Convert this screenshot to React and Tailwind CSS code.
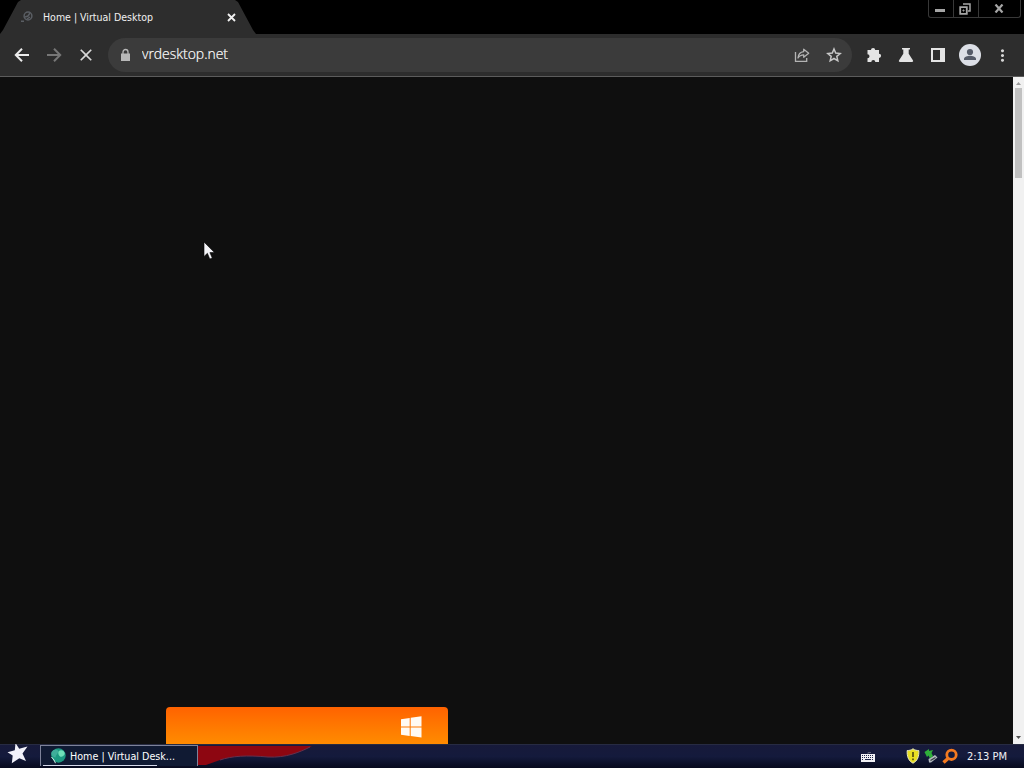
import React from "react";
import { MdClose, MdMoreVert } from "react-icons/md";

const ToolButton = ({ children }) => (
  <button className="flex h-8 w-8 shrink-0 items-center justify-center">
    {children}
  </button>
);

const FaviconLoading = () => (
  <svg className="h-3 w-3" viewBox="0 0 12 12" fill="none">
    <circle cx="7" cy="5" r="3.900" stroke="#5a5e64" strokeWidth="1.500" />
    <path d="M4 6l3-1 2-3M6 8l3-2" stroke="#5a5e64" strokeWidth="1.500" />
    <path d="M0 9.500h3V11H0z" fill="#5a5e64" />
  </svg>
);

const ArrowIcon = ({ className }) => (
  <svg
    className={className}
    viewBox="0 0 16 16"
    fill="none"
    stroke="currentColor"
    strokeWidth="2"
  >
    <path d="M15 8H2.500M8 1.800L1.800 8 8 14.200" />
  </svg>
);

const LockIcon = () => (
  <svg className="h-[14px] w-[14px]" viewBox="0 0 14 14">
    <path d="M3 5.500h9V13H3z" fill="#b8b8b8" />
    <path
      d="M5 6V4a2.500 2.500 0 0 1 5 0v2"
      fill="none"
      stroke="#b8b8b8"
      strokeWidth="1.300"
    />
  </svg>
);

const ShareIcon = () => (
  <svg
    className="h-4 w-4"
    viewBox="0 0 16 16"
    fill="none"
    stroke="#b4b4b4"
    strokeWidth="1.300"
  >
    <path d="M1.500 5v9.300h11.200V11" />
    <path
      d="M9.700 2.200l5 4-5 4V7.800C7 7.800 5.300 8.800 4 11c.3-3.700 2.300-6 5.700-6.400z"
      strokeLinejoin="round"
    />
  </svg>
);

const StarIcon = () => (
  <svg
    className="h-4 w-4"
    viewBox="0 0 16 16"
    fill="none"
    stroke="#c8c8c8"
    strokeWidth="1.500"
  >
    <path d="M8 2l1.700 4.100 4.500.4-3.400 2.900 1 4.400L8 11.500l-3.800 2.300 1-4.400-3.400-2.900 4.500-.4z" />
  </svg>
);

const PuzzleIcon = () => (
  <svg className="h-4 w-4" viewBox="0 0 16 16" fill="#e4e4e4">
    <path d="M1.500 3H5a2.100 2.100 0 1 1 4.200 0H13v3.700a2.100 2.100 0 1 1 0 4.200V15H9.300a2 2 0 1 0-4 0H1.500v-3.700a2 2 0 1 0 0-4z" />
  </svg>
);

const FlaskIcon = () => (
  <svg className="h-4 w-4" viewBox="0 0 16 16" fill="#e4e4e4">
    <path d="M4 1h8v1.500h-1.300v4.300l4.200 6.500c.6 1 .1 1.700-.9 1.700H2c-1 0-1.500-.7-.9-1.700l4.200-6.500V2.500H4z" />
  </svg>
);

const SidePanelIcon = () => (
  <svg className="h-4 w-4" viewBox="0 0 16 16">
    <path
      d="M1 1h14v14H1zM3 3v10h7V3z"
      fill="#e4e4e4"
      fillRule="evenodd"
    />
  </svg>
);

const AvatarIcon = () => (
  <svg className="h-[22px] w-[22px]" viewBox="0 0 22 22">
    <circle cx="11" cy="11" r="11" fill="#dcdfe6" />
    <circle cx="11" cy="8" r="3.100" fill="#555b68" />
    <path d="M5 16v-1.300c0-2 3.700-3 6-3s6 1 6 3V16z" fill="#555b68" />
  </svg>
);

const WindowControls = () => (
  <div className="mr-[3px] flex h-[18px] w-[93px] rounded-b-[3px] border border-t-0 border-[#383838]">
    <button className="flex w-[25px] items-center justify-center border-r border-[#383838]">
      <svg className="mr-0.5 h-3 w-3" viewBox="0 0 12 12">
        <path d="M1 6h10v3H1z" fill="#a5a5a5" />
      </svg>
    </button>
    <button className="flex w-[25px] items-center justify-center border-r border-[#383838]">
      <svg
        className="mr-[3px] h-3 w-3"
        viewBox="0 0 12 12"
        fill="none"
        stroke="#a5a5a5"
      >
        <path d="M4 1h7v7H9" strokeWidth="1.500" />
        <path d="M1.200 4.200h6.600v6.600H1.200z" strokeWidth="1.800" />
        <path d="M4 7h1v1H4z" />
      </svg>
    </button>
    <button className="flex flex-1 items-center justify-center">
      <svg className="mr-0.5 h-[9px] w-[10px]" viewBox="0 0 10 9">
        <path
          d="M1.500 .5l7 8M8.500 .5l-7 8"
          stroke="#a5a5a5"
          strokeWidth="2.200"
        />
      </svg>
    </button>
  </div>
);

const TitleBar = () => (
  <div className="flex h-[34px] items-start justify-between bg-black">
    <div className="flex h-[34px] w-[256px] items-center bg-[#2d2d2d] pl-[21px] [clip-path:polygon(0_100%,3px_30px,18px_2px,21px_0,235px_0,238px_2px,253px_30px,100%_100%)]">
      <FaviconLoading />
      <svg className="ml-[10px] h-4 w-[120px]" viewBox="0 0 120 16">
        <text
          x="0"
          y="12"
          textLength="110"
          lengthAdjust="spacingAndGlyphs"
          className="fill-[#f0f0f0] font-['DejaVu_Sans_Condensed','DejaVu_Sans',sans-serif] text-[11px]"
        >
          Home | Virtual Desktop
        </text>
      </svg>
      <button className="ml-[64px]">
        <svg className="h-[9px] w-[9px]" viewBox="0 0 9 9">
          <path
            d="M1 1l7 7M8 1L1 8"
            stroke="#f2f2f2"
            strokeWidth="1.800"
          />
        </svg>
      </button>
    </div>
    <WindowControls />
  </div>
);

const Toolbar = () => (
  <div className="flex h-[43px] items-center border-b border-[#5c5c5c] bg-[#2d2d2d] pl-[6px]">
    <ToolButton>
      <ArrowIcon className="h-4 w-4 text-[#ececec]" />
    </ToolButton>
    <ToolButton>
      <ArrowIcon className="h-4 w-4 rotate-180 text-[#777777]" />
    </ToolButton>
    <ToolButton>
      <MdClose className="h-5 w-5 text-[#d8d8d8]" />
    </ToolButton>
    <div className="ml-[6px] mr-[6px] flex h-[34px] w-[744px] shrink-0 items-center rounded-full bg-[#3b3b3b] pl-[10px] pr-[2px]">
      <LockIcon />
      <svg className="ml-[10px] h-5 w-[100px]" viewBox="0 0 100 20">
        <text
          x="0"
          y="14"
          textLength="86"
          lengthAdjust="spacingAndGlyphs"
          className="fill-white stroke-white font-['Open_Sans','Noto_Sans',sans-serif] text-[14.5px] font-light [stroke-width:0.2px]"
        >
          vrdesktop.net
        </text>
      </svg>
      <div className="ml-auto flex">
        <ToolButton>
          <ShareIcon />
        </ToolButton>
        <ToolButton>
          <StarIcon />
        </ToolButton>
      </div>
    </div>
    <ToolButton>
      <PuzzleIcon />
    </ToolButton>
    <ToolButton>
      <FlaskIcon />
    </ToolButton>
    <ToolButton>
      <SidePanelIcon />
    </ToolButton>
    <ToolButton>
      <AvatarIcon />
    </ToolButton>
    <ToolButton>
      <MdMoreVert className="h-[19px] w-[19px] text-[#d6d6d6]" />
    </ToolButton>
  </div>
);

const Scrollbar = () => (
  <div className="flex w-[11px] flex-col items-center bg-[#f1f1f1]">
    <svg className="h-[11px] w-[7px] shrink-0" viewBox="0 0 7 11">
      <path d="M1 8l2.500-3L6 8z" fill="#999999" />
    </svg>
    <div className="h-[90px] w-[7px] bg-[#c1c1c1]" />
    <svg className="mt-auto h-[11px] w-[7px] shrink-0" viewBox="0 0 7 11">
      <path d="M1 3l2.500 3L6 3z" fill="#505050" />
    </svg>
  </div>
);

const Page = () => (
  <div className="relative flex min-h-0 flex-1 bg-[#0f0f0f]">
    <div className="flex flex-1 flex-col justify-end pl-[166px]">
      <div className="flex h-[37px] w-[282px] justify-end rounded-t-[4px] bg-linear-to-b from-[#ff6200] to-[#ff8b00] pr-[26px] pt-[9px]">
        <svg className="h-[22px] w-[22px]" viewBox="0 0 22 22" fill="#fffaf3">
          <path d="M1 3.200l8.700-1.300v8.600H1zM10.700 1.800L21.500.3v10.200H10.700zM1 11.500h8.700v8.400L1 18.700zM10.700 11.500h10.800v10L10.700 20z" />
        </svg>
      </div>
    </div>
    <Scrollbar />
    <svg
      className="absolute left-[203px] top-[164px] h-[20px] w-[13px]"
      viewBox="0 0 13 20"
    >
      <path
        d="M1 1v14.500l3.400-3.200 2.400 5.700 2.500-1-2.400-5.400h4.600z"
        fill="#f4f4f8"
        stroke="#000000"
        strokeWidth="0.600"
      />
    </svg>
  </div>
);

const StartStar = () => (
  <svg className="mb-[6px] ml-[7px] h-[21px] w-[21px]" viewBox="0 0 21 21">
    <path
      d="M8.500 0l3.700 5.700L20.500 3.500l-5 7L19 18l-6.700-2.700-7.500 5 .9-7.800L.5 9.300l7.300-2.100z"
      fill="#f1f1fa"
    />
  </svg>
);

const GlobeIcon = () => (
  <svg className="h-4 w-4 shrink-0" viewBox="0 0 16 16">
    <circle cx="8.500" cy="7.500" r="7.200" fill="#1c9a82" />
    <path
      d="M1.500 4C3.500 1 6.500.8 8 2.500c1 2.500-2 3.500-2.500 7C2.500 9 .5 7 1.500 4z"
      fill="#3fae9a"
    />
    <path
      d="M8.500 3.500c2-2 5-1.200 6 1 .8 2-1.200 4-3 4.300-2 .4-3.800-2.800-3-5.300z"
      fill="#6fe0b8"
    />
    <path d="M1.500 9l2.500 3 1.500 3.200" stroke="#d3ece7" fill="none" />
  </svg>
);

const KeyboardIcon = () => (
  <svg className="h-[10px] w-[14px]" viewBox="0 0 14 10">
    <path d="M7 2V.5h3" stroke="#55596e" fill="none" />
    <path d="M0 2h14v8H0z" fill="#f0f0f4" />
    <path
      d="M1 3.500h12M1 5.500h12M1 7.500h2M11 7.500h2"
      stroke="#20264a"
      strokeDasharray="1 1"
    />
    <path d="M4 7.500h6" stroke="#20264a" />
  </svg>
);

const ShieldIcon = () => (
  <svg className="h-4 w-[14px]" viewBox="0 0 14 16">
    <path
      d="M7 .8c2 1.500 3.800 1.700 5.800 1.700.4 6-1.300 10.300-5.800 12.700C2.500 12.800.8 8.500 1.200 2.500 3.200 2.500 5 2.300 7 .8z"
      fill="#e8df22"
      stroke="#e7e8c0"
    />
    <path d="M7 4v5M7 10.500v1.700" stroke="#4a4510" strokeWidth="1.600" />
  </svg>
);

const SafelyRemoveIcon = () => (
  <svg className="h-[14px] w-[14px]" viewBox="0 0 14 14">
    <path d="M4.500 10L11 6l2.500 2.500L7 13.500H5z" fill="#b4babf" />
    <path d="M6.500 11.500l5-3" stroke="#343a40" strokeWidth="1.200" />
    <path d="M.5 3l4.500-3v2l4-1-1.500 3L9 7l-3 2.500-1.500-3L3 8z" fill="#2fae3a" />
  </svg>
);

const SearchTrayIcon = () => (
  <svg
    className="h-4 w-4"
    viewBox="0 0 16 16"
    fill="none"
    stroke="#f47a20"
  >
    <circle cx="9.500" cy="6.800" r="4.700" strokeWidth="2.800" />
    <path d="M6 10.500l-4.500 4" strokeWidth="3.400" />
  </svg>
);

const Taskbar = () => (
  <div className="flex h-6 items-center border-t border-[#272b42] bg-linear-to-b from-[#171a3a] via-[#141a3c] to-[#070a1e]">
    <StartStar />
    <button className="relative mb-[2px] ml-[12px] flex h-[21px] w-[158px] items-center border border-b-0 border-[#7d8299] bg-[#101a33] pl-[9px]">
      <GlobeIcon />
      <svg className="ml-[4px] h-4 w-[110px]" viewBox="0 0 110 16">
        <text
          x="0"
          y="12"
          textLength="105"
          lengthAdjust="spacingAndGlyphs"
          className="fill-white font-['DejaVu_Sans_Condensed','DejaVu_Sans',sans-serif] text-[11px]"
        >
          Home | Virtual Desk...
        </text>
      </svg>
      <span className="absolute bottom-0 left-[2px] h-px w-[114px] bg-[#d5d9ea]" />
    </button>
    <svg
      className="mb-[2px] h-[19px] w-[120px]"
      viewBox="0 0 120 19"
      preserveAspectRatio="none"
    >
      <path
        d="M0 0h114C102 6 88 12 70 11 48 9 34 10 22 14L8 19H0z"
        fill="#8d0611"
      />
      <path
        d="M112 1C102 6 88 12 70 11 48 9 34 10 22 14"
        stroke="#66304c"
        fill="none"
      />
    </svg>
    <div className="ml-auto flex items-center pb-[2px] pr-[16px]">
      <div className="pt-[2px]">
        <KeyboardIcon />
      </div>
      <div className="ml-[31px] flex items-center">
        <ShieldIcon />
        <span className="ml-[4px]">
          <SafelyRemoveIcon />
        </span>
        <span className="ml-[4px]">
          <SearchTrayIcon />
        </span>
      </div>
      <svg className="ml-[9px] h-4 w-[41px]" viewBox="0 0 41 16">
        <text
          x="0"
          y="12"
          textLength="40"
          lengthAdjust="spacingAndGlyphs"
          className="fill-[#f0f0f4] font-['DejaVu_Sans_Condensed','DejaVu_Sans',sans-serif] text-[11px]"
        >
          2:13 PM
        </text>
      </svg>
    </div>
  </div>
);

const App = () => {
  return (
    <div className="flex h-[768px] w-[1024px] flex-col overflow-hidden bg-black">
      <TitleBar />
      <Toolbar />
      <Page />
      <Taskbar />
    </div>
  );
};

export default App;
